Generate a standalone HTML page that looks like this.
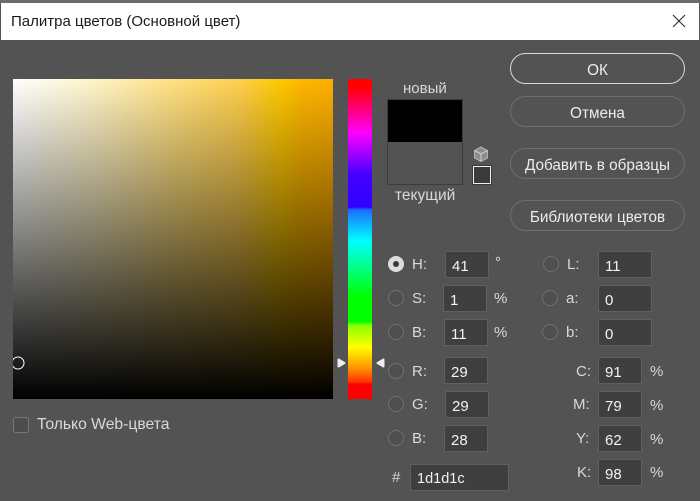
<!DOCTYPE html>
<html lang="ru"><head><meta charset="utf-8"><title>Палитра цветов</title>
<style>
html,body{margin:0;padding:0;width:700px;height:501px;overflow:hidden;background:#535353}
*{box-sizing:border-box}
body{position:relative;font-family:"Liberation Sans",sans-serif;font-size:15px;color:#d6dade}
.a{position:absolute}
.t{position:absolute;white-space:nowrap;line-height:18px}
.f{position:absolute;height:27px;background:#3f3f3f;border:1px solid #5f5f5f;color:#f0f4f8;font-size:15px;line-height:25px;padding-left:6px;padding-top:1.5px}
.r{position:absolute;width:16px;height:16px;border-radius:50%;border:1px solid #707070;background:#4f4f4f}
.b{position:absolute;left:510px;width:175px;height:31px;border:1px solid #6e6e6e;border-radius:15.5px;text-align:center;line-height:29px;padding-top:2px;color:#ececec;font-size:15.300px}
</style></head><body>
<div class="a" style="left:0;top:0;width:700px;height:3px;background:#6b6b6b"></div>
<div class="a" style="left:1px;top:3px;width:698px;height:37px;background:#fff"></div>
<div class="t" style="left:11px;top:13px;color:#1a1a1a;font-size:15px">Палитра цветов (Основной цвет)</div>
<svg class="a" style="left:672px;top:14px" width="14" height="14"><path d="M1 1L13 13M13 1L1 13" stroke="#222" stroke-width="1" fill="none"/></svg>

<div class="a" style="left:13px;top:79px;width:320px;height:320px;background:linear-gradient(to bottom,rgba(0,0,0,0),#000),linear-gradient(to right,#fff 0,#fff4c8 25%,#ffe080 50%,#ffd050 70%,#ffc800 84%,#ffb800 90%,#ffae00 100%)"></div>
<svg class="a" style="left:13px;top:355px" width="12" height="16"><circle cx="5" cy="8" r="6" fill="none" stroke="#fff" stroke-width="1"/></svg>

<div class="a" style="left:348px;top:79px;width:24px;height:320px;background:linear-gradient(to bottom,#f00 0,#f00 8px,#f0f 54px,#4400ff 95px,#3000ff 128px,#1a70ff 131px,#0ff 162px,#0f8 188px,#0f0 218px,#0f0 243px,#8f0 246px,#ff0 268px,#f90 288px,#f30 303px,#f00 305px,#f00 320px)"></div>
<svg class="a" style="left:337px;top:357px" width="10" height="12"><path d="M1.500 2.500L7.500 6L1.500 9.500Z" fill="#eee" stroke="#eee" stroke-width="2" stroke-linejoin="round"/></svg>
<svg class="a" style="left:375px;top:357px" width="10" height="12"><path d="M8.500 2.500L2.500 6L8.500 9.500Z" fill="#eee" stroke="#eee" stroke-width="2" stroke-linejoin="round"/></svg>

<div class="t" style="left:403px;top:80px;font-size:15px">новый</div>
<div class="a" style="left:387px;top:99px;width:76px;height:86px;border:1px solid #3c3c3c;background:#535353"><div style="height:42px;background:#000"></div></div>
<div class="t" style="left:395px;top:187px;font-size:15.500px">текущий</div>
<svg class="a" style="left:473px;top:146px" width="16" height="17"><path d="M8 1L14.500 4.500V12L8 15.500L1.500 12V4.500Z" fill="#8d8d8d" stroke="#b5b5b5"/><path d="M1.500 4.500L8 8L14.500 4.500M8 8V15.500" fill="none" stroke="#cfcfcf"/></svg>
<div class="a" style="left:473px;top:166px;width:18px;height:18px;border:1px solid #eee;background:#3a3a3a;box-shadow:0 0 0 1px #3a3a3a"></div>

<div class="b" style="top:53px;border:1.500px solid #d8d8d8">ОК</div>
<div class="b" style="top:96px">Отмена</div>
<div class="b" style="top:148px">Добавить в образцы</div>
<div class="b" style="top:200px">Библиотеки цветов</div>

<div class="a" style="left:388px;top:256px;width:16px;height:16px;border-radius:50%;background:#dcdcdc"><div class="a" style="left:5px;top:5px;width:6px;height:6px;border-radius:50%;background:#3a3a3a"></div></div>
<div class="r" style="left:388px;top:290px"></div>
<div class="r" style="left:388px;top:324px"></div>
<div class="r" style="left:388px;top:363px"></div>
<div class="r" style="left:388px;top:396px"></div>
<div class="r" style="left:388px;top:430px"></div>
<div class="r" style="left:543px;top:256px"></div>
<div class="r" style="left:542px;top:290px"></div>
<div class="r" style="left:542px;top:324px"></div>

<div class="t" style="left:412px;top:256px">H:</div>
<div class="t" style="left:412px;top:290px">S:</div>
<div class="t" style="left:412px;top:324px">B:</div>
<div class="t" style="left:412px;top:363px">R:</div>
<div class="t" style="left:412px;top:396px">G:</div>
<div class="t" style="left:412px;top:430px">B:</div>
<div class="t" style="left:392px;top:469px">#</div>
<div class="t" style="left:567px;top:256px">L:</div>
<div class="t" style="left:566px;top:290px">a:</div>
<div class="t" style="left:566px;top:324px">b:</div>
<div class="t" style="left:576px;top:363px">C:</div>
<div class="t" style="left:573px;top:396px">M:</div>
<div class="t" style="left:576px;top:430px">Y:</div>
<div class="t" style="left:577px;top:464px">K:</div>

<div class="f" style="left:445px;top:251px;width:44px">41</div>
<div class="f" style="left:443px;top:285px;width:44px">1</div>
<div class="f" style="left:444px;top:319px;width:44px">11</div>
<div class="f" style="left:444px;top:357px;width:44px">29</div>
<div class="f" style="left:445px;top:391px;width:44px">29</div>
<div class="f" style="left:444px;top:425px;width:44px">28</div>
<div class="f" style="left:410px;top:464px;width:99px;font-size:14.500px">1d1d1c</div>
<div class="f" style="left:598px;top:251px;width:54px">11</div>
<div class="f" style="left:598px;top:285px;width:54px">0</div>
<div class="f" style="left:598px;top:319px;width:54px">0</div>
<div class="f" style="left:598px;top:357px;width:44px">91</div>
<div class="f" style="left:598px;top:391px;width:44px">79</div>
<div class="f" style="left:598px;top:425px;width:44px">62</div>
<div class="f" style="left:598px;top:459px;width:44px">98</div>

<div class="t" style="left:495px;top:254px">°</div>
<div class="t" style="left:494px;top:290px">%</div>
<div class="t" style="left:494px;top:324px">%</div>
<div class="t" style="left:650px;top:363px">%</div>
<div class="t" style="left:650px;top:397px">%</div>
<div class="t" style="left:650px;top:431px">%</div>
<div class="t" style="left:650px;top:464px">%</div>

<div class="a" style="left:13px;top:417px;width:16px;height:16px;border:1.500px solid #777;border-radius:3px;background:#4c4c4c"></div>
<div class="t" style="left:37px;top:416px;font-size:15.700px">Только Web-цвета</div>
</body></html>
